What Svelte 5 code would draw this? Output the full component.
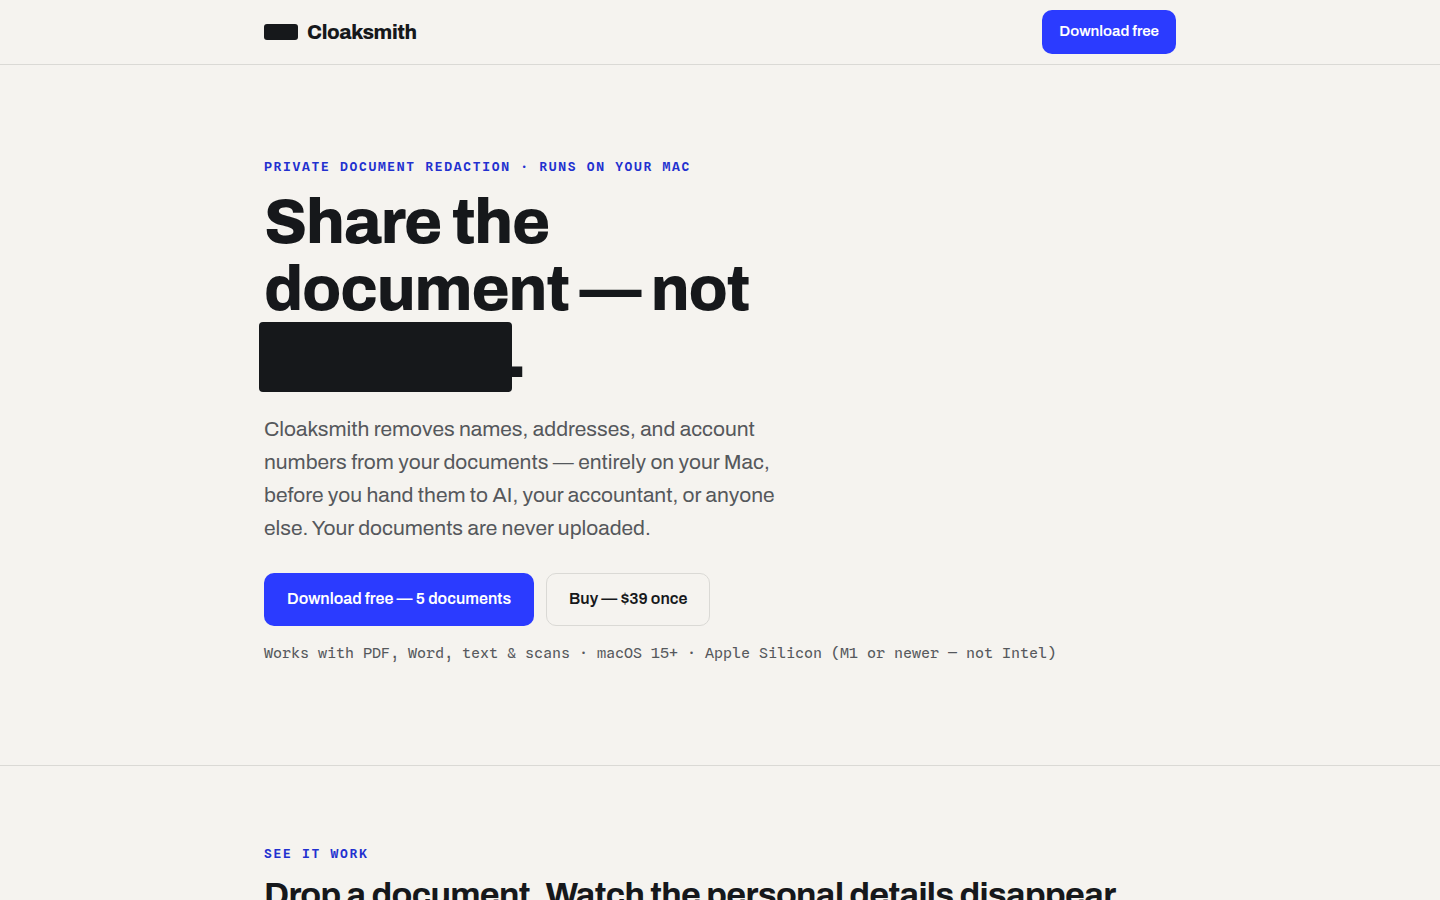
<script lang="ts">
	const links = {
		download: '#download',
		buy: '#buy'
	};
</script>

<header>
	<div class="wrap bar">
		<a class="brand" href="/">
			<span class="mark"></span>
			Cloaksmith
		</a>
		<a class="btn primary small" href={links.download}>Download free</a>
	</div>
</header>

<main>
	<section class="hero">
		<div class="wrap">
			<p class="eyebrow">Private document redaction · Runs on your Mac</p>
			<h1>Share the document — not <span class="redacted"></span>.</h1>
			<p class="lede">
				Cloaksmith removes names, addresses, and account numbers from your documents — entirely on
				your Mac, before you hand them to AI, your accountant, or anyone else. Your documents are
				never uploaded.
			</p>
			<div class="actions">
				<a class="btn primary" href={links.download}>Download free — 5 documents</a>
				<a class="btn ghost" href={links.buy}>Buy — $39 once</a>
			</div>
			<p class="note">
				Works with PDF, Word, text &amp; scans · macOS 15+ · Apple Silicon (M1 or newer — not Intel)
			</p>
		</div>
	</section>

	<section class="demo">
		<div class="wrap">
			<p class="eyebrow">See it work</p>
			<h2>Drop a document. Watch the personal details disappear.</h2>
		</div>
	</section>
</main>

<style>
	:global(body) {
		background: #f5f3ef;
		color: #16181b;
		font-family: Archivo, 'Liberation Sans', Arial, sans-serif;
	}
	.wrap {
		max-width: 912px;
		margin: 0 auto;
		padding: 0 24px;
	}
	header {
		border-bottom: 1px solid #dad9d5;
	}
	.bar {
		display: flex;
		align-items: center;
		justify-content: space-between;
		min-height: 64px;
	}
	.brand {
		display: flex;
		align-items: center;
		gap: 9px;
		color: inherit;
		font-size: 20px;
		font-weight: 800;
		letter-spacing: -0.02em;
		text-decoration: none;
	}
	.mark {
		width: 34px;
		height: 16px;
		border-radius: 3px;
		background: #16181b;
	}
	.btn {
		box-sizing: border-box;
		padding: 15px 22px 17px;
		border: 1px solid transparent;
		border-radius: 10px;
		font-size: 16px;
		font-weight: 600;
		line-height: 19px;
		text-decoration: none;
		white-space: nowrap;
	}
	.small {
		padding: 11px 16px 13px;
		font-size: 15px;
		line-height: 18px;
	}
	.primary {
		background: #2b3bff;
		color: #fff;
	}
	.ghost {
		border-color: #dad9d5;
		color: #16181b;
	}
	.hero {
		padding: 91px 0 100px;
		border-bottom: 1px solid #dad9d5;
	}
	.demo {
		padding: 77px 0 88px;
	}
	.eyebrow {
		margin: 0;
		color: #2230cf;
		font-family: 'Spline Sans Mono', 'IBM Plex Mono', 'Liberation Mono', monospace;
		font-size: 13px;
		font-weight: 600;
		line-height: 20px;
		letter-spacing: 0.13em;
		text-transform: uppercase;
	}
	h1 {
		max-width: 560px;
		margin: 13px 0 0;
		font-size: 62px;
		font-weight: 800;
		line-height: 67px;
		letter-spacing: -0.02em;
	}
	.redacted {
		display: inline-block;
		width: 253px;
		height: 70px;
		margin: -4px -5px;
		border-radius: 4px;
		background: #16181b;
		vertical-align: -11px;
	}
	.lede {
		max-width: 530px;
		margin: 23px 0 0;
		color: #55585c;
		font-size: 21px;
		line-height: 33px;
	}
	.actions {
		display: flex;
		flex-wrap: wrap;
		gap: 12px;
		margin-top: 28px;
	}
	.note {
		margin: 16px 0 0;
		color: #55585c;
		font-family: 'Spline Sans Mono', 'IBM Plex Mono', 'Liberation Mono', monospace;
		font-size: 15px;
		line-height: 23px;
	}
	h2 {
		margin: 12px 0 0;
		font-size: 34px;
		font-weight: 700;
		line-height: 40px;
		letter-spacing: -0.02em;
	}
</style>
